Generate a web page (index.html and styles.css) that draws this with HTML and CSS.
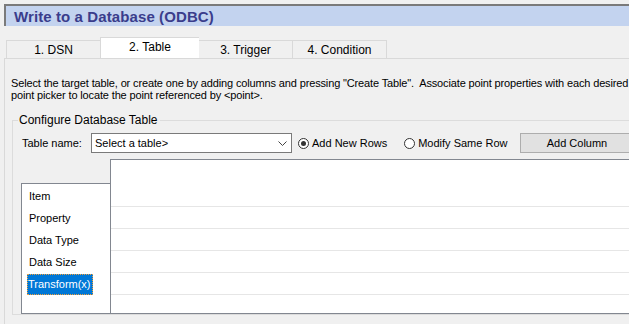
FILE: index.html
```html
<!DOCTYPE html>
<html>
<head>
<meta charset="utf-8">
<link rel="stylesheet" href="styles.css">
</head>
<body>
<div class="title">Write to a Database (ODBC)</div>
<div class="tabs">
  <div class="tab">1. DSN</div>
  <div class="tab active">2. Table</div>
  <div class="tab">3. Trigger</div>
  <div class="tab">4. Condition</div>
</div>
<div class="panel">
  <p class="desc">Select the target table, or create one by adding columns and pressing "Create Table".&nbsp; Associate point properties with each desired<br>point picker to locate the point referenced by &lt;point&gt;.</p>
  <fieldset class="group">
    <legend class="legend">Configure Database Table</legend>
    <div class="controls">
      <span class="label">Table name:</span>
      <div class="combo">
        <span class="combo-text">Select a table&gt;</span>
        <svg class="chev" width="9" height="5" viewBox="0 0 9 5"><path d="M0.5 0.5 L4.5 4.5 L8.5 0.5" fill="none" stroke="#444" stroke-width="1"/></svg>
      </div>
      <label class="radio"><span class="circle checked"></span>Add New Rows</label>
      <label class="radio second"><span class="circle"></span>Modify Same Row</label>
      <div class="button">Add Column</div>
    </div>
    <div class="grid-area">
      <div class="list">
        <div class="item">Item</div>
        <div class="item">Property</div>
        <div class="item">Data Type</div>
        <div class="item">Data Size</div>
        <div class="item"><span class="selected">Transform(x)</span></div>
      </div>
      <div class="grid">
        <div class="grid-head"></div>
        <div class="grid-row"></div>
        <div class="grid-row"></div>
        <div class="grid-row"></div>
        <div class="grid-row"></div>
        <div class="grid-row last"></div>
      </div>
    </div>
  </fieldset>
</div>
</body>
</html>
```

FILE: styles.css
```css
html, body {
  margin: 0;
  padding: 0;
  overflow: hidden;
}
body {
  width: 629px;
  height: 324px;
  background: #f0f0f0;
  font-family: "Liberation Sans", Arial, sans-serif;
  font-size: 11px;
  color: #000;
}
.title {
  margin: 4px 0 0 4px;
  height: 20px;
  border-top: 2px solid #7a7a7a;
  border-left: 2px solid #7a7a7a;
  background: #c3d3ef;
  color: #3a3d8c;
  font-weight: bold;
  font-size: 15px;
  line-height: 21px;
  padding-left: 8px;
  white-space: nowrap;
  letter-spacing: 0.1px;
}
.tabs {
  display: flex;
  align-items: flex-end;
  margin: 12px 0 0 6px;
  height: 20px;
}
.tab {
  width: 93px;
  height: 17px;
  line-height: 18px;
  border: 1px solid #d9d9d9;
  border-bottom: none;
  border-right: none;
  background: #f0f0f0;
  text-align: center;
  font-size: 12px;
}
.tab:last-child {
  border-right: 1px solid #d9d9d9;
}
.tab.active {
  height: 20px;
  line-height: 18px;
  background: #fff;
  border-color: #d9d9d9;
  width: 98px;
}
.tab.active + .tab {
  border-left: none;
}
.panel {
  margin-left: 4px;
  border-left: 1px solid #d9d9d9;
  border-top: 1px solid #d9d9d9;
  height: 270px;
}
.desc {
  margin: 0;
  padding: 18px 0 0 6px;
  line-height: 12px;
  white-space: nowrap;
  font-size: 11px;
  letter-spacing: -0.14px;
}
.group {
  margin: 12px 0 0 7px;
  padding: 0;
  border: 1px solid #dcdcdc;
  border-right: none;
  height: 200px;
}
.legend {
  margin-left: 5px;
  padding: 0 2px 0 1px;
  font-size: 12px;
  line-height: 14px;
}
.controls {
  display: flex;
  align-items: center;
  height: 20px;
  margin-top: 6px;
  white-space: nowrap;
}
.label {
  margin-left: 9px;
  width: 69px;
  font-size: 11px;
}
.combo {
  display: flex;
  align-items: center;
  justify-content: space-between;
  height: 18px;
  border: 1px solid #7a7a7a;
  background: #fff;
  padding: 0 4px 0 3px;
  box-sizing: content-box;
  width: 192px;
}
.combo-text {
  font-size: 11px;
}
.chev {
  display: block;
}
.radio {
  display: flex;
  align-items: center;
  margin-left: 6px;
  font-size: 11px;
}
.radio.second {
  margin-left: 17px;
}
.circle {
  width: 11px;
  height: 11px;
  border: 1px solid #333;
  border-radius: 50%;
  background: #fff;
  margin-right: 3px;
  box-sizing: border-box;
  position: relative;
}
.circle.checked::after {
  content: "";
  position: absolute;
  left: 2px;
  top: 2px;
  width: 5px;
  height: 5px;
  border-radius: 50%;
  background: #333;
}
.button {
  margin-left: 13px;
  width: 113px;
  height: 18px;
  line-height: 18px;
  border: 1px solid #adadad;
  background: #e1e1e1;
  text-align: center;
  flex: none;
  text-indent: -2px;
  box-sizing: content-box;
  font-size: 11px;
}
.grid-area {
  display: flex;
  align-items: flex-end;
  margin: 6px 0 0 8px;
}
.list {
  width: 89px;
  border: 1px solid #828790;
  border-right: none;
  background: #fff;
  padding-top: 1px;
  box-sizing: border-box;
  height: 131px;
}
.item {
  height: 22px;
  line-height: 22px;
  padding-left: 7px;
  font-size: 11px;
}
.selected {
  display: inline-block;
  margin-left: -2px;
  padding: 0 1px;
  height: 21px;
  line-height: 21px;
  background: #0078d7;
  color: #fff;
  outline: 1px dotted #f2a03a;
  outline-offset: -1px;
  width: 64px;
}
.grid {
  flex: none;
  width: 600px;
  height: 155px;
  border: 1px solid #828790;
  border-right: none;
  background: #fff;
  box-sizing: border-box;
}
.grid-head {
  height: 46px;
  border-bottom: 1px solid #e6e6e6;
}
.grid-row {
  height: 21px;
  border-bottom: 1px solid #e6e6e6;
}
.grid-row.last {
  border-bottom: none;
}
```
